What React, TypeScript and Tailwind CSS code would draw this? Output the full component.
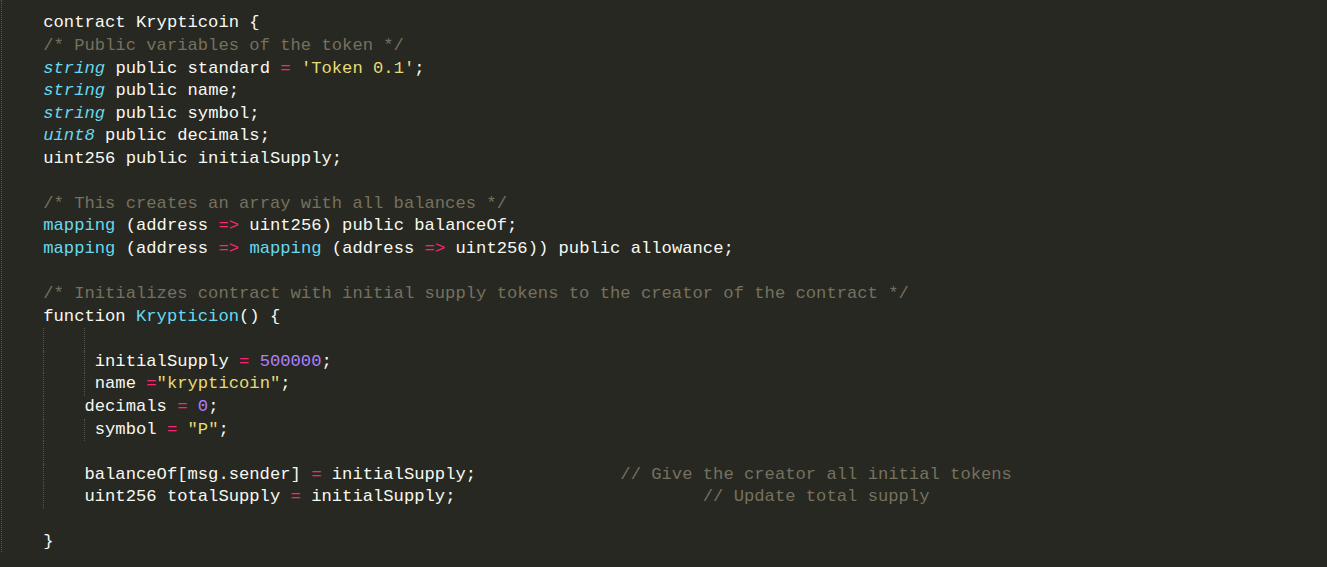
import React from "react";

type Tok = [string, string?];

// colour classes for the monokai theme
const T = "text-[#f8f8f2]";
const C = "text-[#75715e]";
const K = "text-[#66d9ef]";
const KI = "text-[#66d9ef] italic";
const P = "text-[#f92672]";
const S = "text-[#e6db74]";
const N = "text-[#ae81ff]";

type Line = { toks: Tok[]; guides?: number[] };

const lines: Line[] = [
  { toks: [["    contract Krypticoin {", T]] },
  { toks: [["    "], ["/* Public variables of the token */", C]] },
  {
    toks: [
      ["    "],
      ["string", KI],
      [" public standard ", T],
      ["=", P],
      [" "],
      ["'Token 0.1'", S],
      [";", T],
    ],
  },
  { toks: [["    "], ["string", KI], [" public name;", T]] },
  { toks: [["    "], ["string", KI], [" public symbol;", T]] },
  { toks: [["    "], ["uint8", KI], [" public decimals;", T]] },
  { toks: [["    uint256 public initialSupply;", T]] },
  { toks: [] },
  { toks: [["    "], ["/* This creates an array with all balances */", C]] },
  {
    toks: [
      ["    "],
      ["mapping", K],
      [" (address ", T],
      ["=>", P],
      [" uint256) public balanceOf;", T],
    ],
  },
  {
    toks: [
      ["    "],
      ["mapping", K],
      [" (address ", T],
      ["=>", P],
      [" "],
      ["mapping", K],
      [" (address ", T],
      ["=>", P],
      [" uint256)) public allowance;", T],
    ],
  },
  { toks: [] },
  {
    toks: [
      ["    "],
      [
        "/* Initializes contract with initial supply tokens to the creator of the contract */",
        C,
      ],
    ],
  },
  { toks: [["    function ", T], ["Krypticion", K], ["() {", T]] },
  { toks: [], guides: [4, 8] },
  {
    toks: [["         initialSupply ", T], ["=", P], [" "], ["500000", N], [";", T]],
    guides: [4, 8],
  },
  {
    toks: [["         name ", T], ["=", P], ['"krypticoin"', S], [";", T]],
    guides: [4, 8],
  },
  {
    toks: [["        decimals ", T], ["=", P], [" "], ["0", N], [";", T]],
    guides: [4],
  },
  {
    toks: [["         symbol ", T], ["=", P], [" "], ['"P"', S], [";", T]],
    guides: [4, 8],
  },
  { toks: [], guides: [4] },
  {
    toks: [
      ["        balanceOf[msg.sender] ", T],
      ["=", P],
      [" initialSupply;", T],
      ["              "],
      ["// Give the creator all initial tokens", C],
    ],
    guides: [4],
  },
  {
    toks: [
      ["        uint256 totalSupply ", T],
      ["=", P],
      [" initialSupply;", T],
      ["                        "],
      ["// Update total supply", C],
    ],
    guides: [4],
  },
  { toks: [] },
  { toks: [["    }", T]] },
];

const guideLeft: Record<number, string> = {
  4: "left-[41px]",
  8: "left-[82px]",
};

export default function App() {
  return (
    <div className="h-[567px] w-[1327px] overflow-hidden bg-[#272822]">
      <div className="ml-px h-[552px] border-l border-dotted border-[#55554c] pt-[12.4px]">
        {lines.map((line, i) => (
          <div
            key={i}
            className="relative h-[22.57px] font-['Liberation_Mono',monospace] text-[17.18px] leading-[22.57px] whitespace-pre"
          >
            {line.guides?.map((g) => (
              <span
                key={g}
                className={`absolute top-0 h-full border-l border-dotted border-[#55554c] ${guideLeft[g]}`}
              />
            ))}
            {line.toks.map((t, j) => (
              <span key={j} className={t[1] ?? T}>
                {t[0]}
              </span>
            ))}
          </div>
        ))}
      </div>
    </div>
  );
}
